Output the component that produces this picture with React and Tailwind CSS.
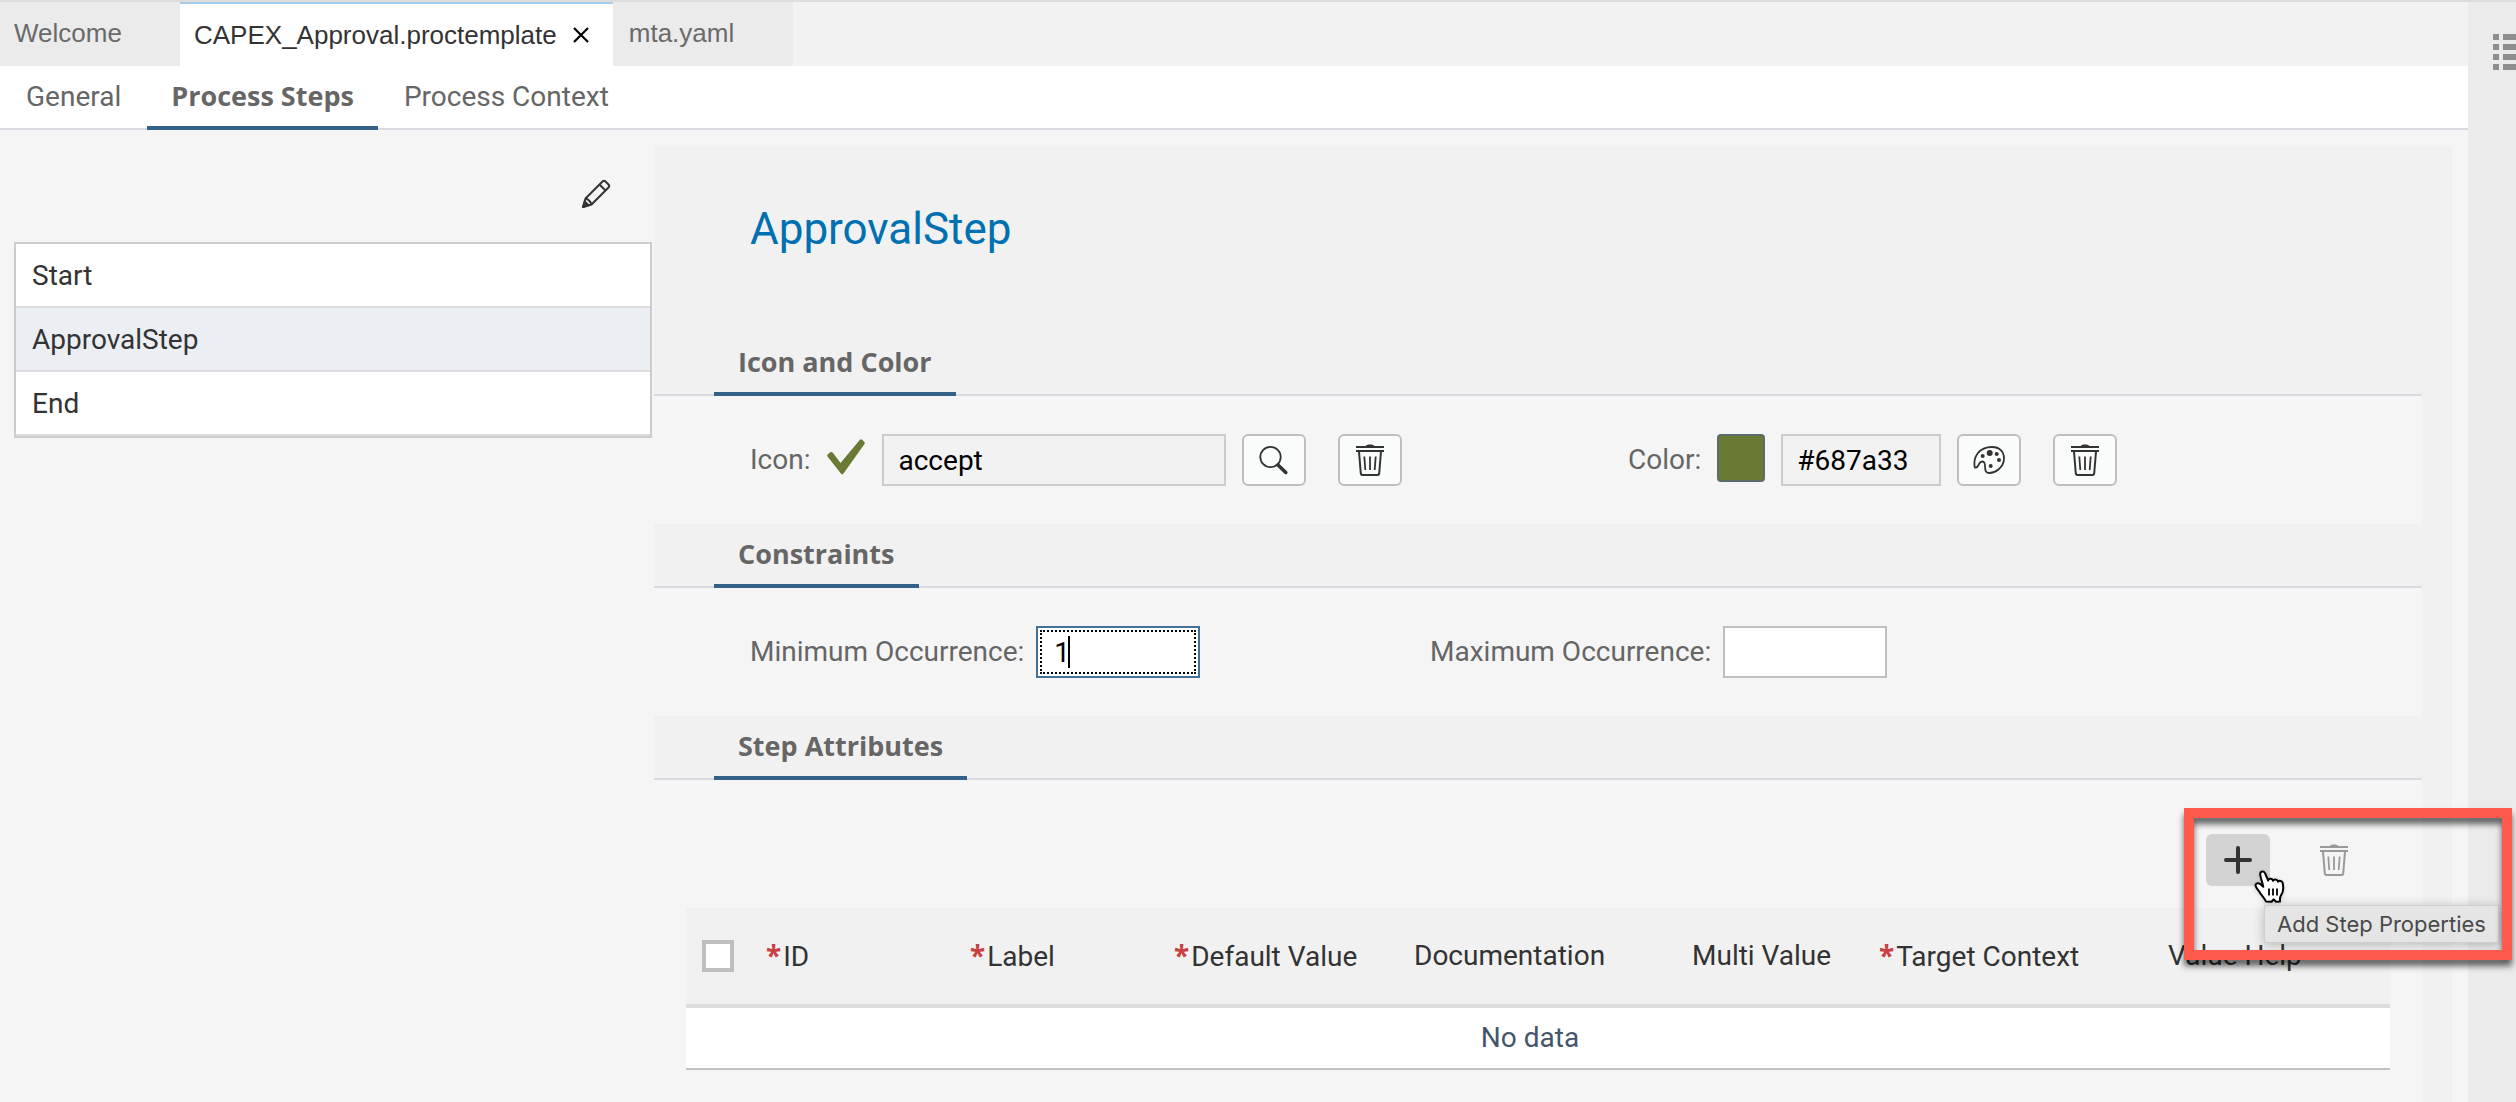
import { useState } from "react";

const COLUMNS = [
  { label: "ID", required: true, width: "w-[204px]" },
  { label: "Label", required: true, width: "w-[204px]" },
  { label: "Default Value", required: true, width: "w-[240px]" },
  { label: "Documentation", width: "w-[278px]" },
  { label: "Multi Value", width: "w-[187px]" },
  { label: "Target Context", required: true, width: "w-[289px]" },
  { label: "Value Help", width: "w-[238px]" },
];

function TrashIcon() {
  return (
    <svg className="size-8" viewBox="0 0 32 32" fill="none" stroke="currentColor" strokeWidth="2" aria-hidden="true">
      <path d="M2 3h28M2 7h28" />
      <path d="M11.500 2.500C12 1 13.500 .5 16 .5s4 .5 4.500 2z" fill="currentColor" stroke="none" />
      <path d="M5 7.500L6.800 29.500Q7 31 8.500 31h15q1.500 0 1.700-1.500L27 7.500" />
      <path d="M10.300 12.500l1 13.500M16 12.500V26M21.700 12.500l-1 13.500" strokeWidth="1.800" />
    </svg>
  );
}

function SearchIcon() {
  return (
    <svg className="size-8" viewBox="0 0 32 32" fill="none" stroke="currentColor" aria-hidden="true">
      <circle cx="12.500" cy="13" r="10.200" strokeWidth="1.800" />
      <path d="M20 21l7.800 7.500" strokeWidth="3.600" strokeLinecap="round" />
    </svg>
  );
}

function PaletteIcon() {
  return (
    <svg className="size-8" viewBox="0 0 32 32" aria-hidden="true">
      <path
        d="M1.800 23.500C-.2 13 6 3 19 3c7.500 0 12 4.500 12 11.500 0 9-9 14.700-15 14.500-5.500-.2-3-6-4.500-10-.8-2-3.700-2.200-5.200.5-1 1.700-1.800 5-4.500 4z"
        fill="none"
        stroke="currentColor"
        strokeWidth="1.800"
      />
      <g fill="currentColor">
        <circle cx="9.700" cy="12" r="2" />
        <circle cx="16.700" cy="9" r="3" />
        <circle cx="23.700" cy="10" r="2" />
        <circle cx="26" cy="16" r="2" />
        <circle cx="17.700" cy="22" r="2" />
      </g>
    </svg>
  );
}

function PencilIcon() {
  return (
    <svg className="size-8" viewBox="0 0 32 32" fill="none" stroke="currentColor" strokeWidth="2" strokeLinejoin="round" aria-hidden="true">
      <path d="M3 29l2.500-8.500L22.500 3.500Q24 2 25.500 3.500l3 3Q30 8 28.500 9.500L11.500 26.500z" />
      <path d="M19.500 6.500l6 6M5.500 20.500q4.500 1.500 6 6" />
      <path d="M3 29l1.700-5.500 3.800 3.800z" fill="currentColor" />
    </svg>
  );
}

function IconButton({ label, children }) {
  return (
    <button
      type="button"
      aria-label={label}
      className="flex h-13 w-16 shrink-0 items-center justify-center rounded-md border-2 border-[#bfbfbf] bg-[#fafcfb] text-[#333]"
    >
      {children}
    </button>
  );
}

function Section({ title, children }) {
  return (
    <section>
      <div className="flex h-16 border-b-2 border-[#dadae0] bg-[#f1f1f1] pl-15">
        <h2 className="-mb-0.5 flex items-center border-b-4 border-[#346187] px-6 font-['Open_Sans','Noto_Sans',sans-serif] text-[27px] font-bold text-[#666]">
          {title}
        </h2>
      </div>
      {children}
    </section>
  );
}

function FileTabs() {
  const idle = "flex w-45 items-center bg-[#ebebeb] pb-0.5 text-[#6a6a6a]";
  return (
    <div className="flex h-16 bg-[#f2f2f2] font-['Liberation_Sans',Arial,sans-serif] text-[26px]">
      <button type="button" className={`${idle} pl-3.5`}>Welcome</button>
      <div className="flex items-center border-t-2 border-[#a5cbeb] bg-white pr-5.5 pl-3.5 text-[#333]">
        <button type="button">CAPEX_Approval.proctemplate</button>
        <button type="button" aria-label="Close" className="ml-3.5 text-black">
          <svg className="size-5" viewBox="0 0 20 20" stroke="currentColor" strokeWidth="2.200" aria-hidden="true">
            <path d="M3 3l14 14M17 3L3 17" />
          </svg>
        </button>
      </div>
      <button type="button" className={`${idle} pl-4`}>mta.yaml</button>
    </div>
  );
}

function EditorNav() {
  return (
    <nav className="flex h-16 gap-0.5 border-b-2 border-[#dadae0] bg-white pl-0.5 text-[#666]">
      <a href="#general" className="flex items-center px-6">General</a>
      <a
        href="#steps"
        aria-current="page"
        className="-mb-0.5 flex items-center border-b-4 border-[#346187] px-6 font-['Open_Sans','Noto_Sans',sans-serif] text-[27px] font-bold"
      >
        Process Steps
      </a>
      <a href="#context" className="flex items-center px-6">Process Context</a>
    </nav>
  );
}

function StepList() {
  const row = "block h-16 w-full border-b-2 border-[#ddd] px-4 pt-0.5 text-left text-[#333]";
  return (
    <div className="w-[654px] shrink-0 pr-0.5 pl-3.5">
      <div className="flex justify-end pt-12 pr-10 pb-8">
        <button type="button" aria-label="Edit steps" className="text-[#333]">
          <PencilIcon />
        </button>
      </div>
      <ul className="border-2 border-[#ccc]">
        <li><button type="button" className={`${row} bg-white`}>Start</button></li>
        <li><button type="button" className={`${row} bg-[#ebeef3]`}>ApprovalStep</button></li>
        <li><button type="button" className={`${row} bg-white`}>End</button></li>
      </ul>
    </div>
  );
}

function IconAndColor() {
  const field = "h-13 min-w-0 border-2 border-[#ccc] bg-[#f2f2f2] px-3.5 text-black";
  return (
    <div className="grid h-32 grid-cols-[878fr_794fr] pt-[38px] pl-24">
      <div className="flex gap-4">
        <label htmlFor="icon" className="leading-[52px] text-[#666]">Icon:</label>
        <svg className="mt-1 h-10 w-10" viewBox="0 0 40 40" aria-hidden="true">
          <path d="M1.500 18.500Q.8 17 2 16l2.300-1.700q1.500-.9 2.600.5L14.500 25 33.500 2.200q1.300-1.500 2.700-.5L38 3.500q1.500 1.200.5 2.500L17.500 35.500q-1.300 1.700-2.600 0z" fill="#687a33" />
        </svg>
        <input id="icon" readOnly value="accept" className={`${field} w-[344px]`} />
        <IconButton label="Browse icons"><SearchIcon /></IconButton>
        <div className="pl-4"><IconButton label="Delete icon"><TrashIcon /></IconButton></div>
      </div>
      <div className="flex gap-4">
        <label htmlFor="color" className="leading-[52px] text-[#666]">Color:</label>
        <span className="size-12 rounded-sm border-2 border-[#5c6b6b] bg-[#687a33]" />
        <input id="color" readOnly value="#687a33" className={`${field} w-40`} />
        <IconButton label="Pick color"><PaletteIcon /></IconButton>
        <div className="pl-4"><IconButton label="Delete color"><TrashIcon /></IconButton></div>
      </div>
    </div>
  );
}

function Constraints() {
  const [min, setMin] = useState("1");
  const [max, setMax] = useState("");
  return (
    <div className="grid h-32 grid-cols-[680fr_992fr] pt-[38px] pl-24">
      <div className="flex gap-3">
        <label htmlFor="min" className="leading-[52px] text-[#666]">Minimum Occurrence:</label>
        <div className="relative h-13 w-41">
          <input
            id="min"
            value={min}
            onChange={(e) => setMin(e.target.value)}
            className="h-13 w-full border-2 border-[#427196] bg-white px-4 text-black outline-2 -outline-offset-6 outline-black outline-dotted"
          />
          <span className="absolute top-2.5 left-8 h-8 w-0.5 bg-black" />
        </div>
      </div>
      <div className="flex gap-3">
        <label htmlFor="max" className="leading-[52px] text-[#666]">Maximum Occurrence:</label>
        <input
          id="max"
          value={max}
          onChange={(e) => setMax(e.target.value)}
          className="h-13 w-41 border-2 border-[#bfbfbf] bg-white px-4 text-black"
        />
      </div>
    </div>
  );
}

function HandCursor() {
  return (
    <svg className="absolute top-9 left-12 h-9 w-8 drop-shadow-sm" viewBox="0 0 32 36" aria-hidden="true">
      <path
        d="M12 31.500c-1-3-4.500-6-6.500-9.500-1.500-2.500-4.500-5-4-7 .6-2 3.200-2.300 5-.8l2.800 2.600C8.300 12 6.500 7.500 6.200 4.500 6 1 10 .5 11.200 3.500l3 7c.3-2.500 4.300-2.500 4.800.3.800-2 4.500-1.600 5 .9 1-1.600 4.300-1 4.800 1.500.6 3 .9 6-.2 9-1 2.500-2.600 4-2.600 6.500v2.800l-4.200.2-2-2.400-2.300 2.500z"
        fill="white"
        stroke="black"
        strokeWidth="2"
        strokeLinejoin="round"
      />
      <path d="M15 18.500v7M19 18.500v7M23 18.500v7" stroke="black" strokeWidth="1.800" />
    </svg>
  );
}

function StepAttributes() {
  return (
    <div className="px-8">
      <div className="flex justify-end gap-8 pt-[54px] pr-6 pb-[22px]">
        <div className="relative">
          <button
            type="button"
            aria-label="Add"
            aria-describedby="add-tip"
            className="flex h-13 w-16 items-center justify-center rounded-md bg-[#d3d3d3] text-[#333]"
          >
            <svg className="size-7" viewBox="0 0 28 28" stroke="currentColor" strokeWidth="4" strokeLinecap="round" aria-hidden="true">
              <path d="M2 14h24M14 2v24" />
            </svg>
          </button>
          <span
            id="add-tip"
            role="tooltip"
            className="absolute top-[71px] left-[58px] z-10 border border-[#cfcfcf] bg-[#e5e5e5] px-3 font-['Inter',sans-serif] text-[22px] leading-9 whitespace-nowrap text-[#4a4a4a] shadow-[0_2px_12px_rgba(0,0,0,0.25)]"
          >
            Add Step Properties
          </span>
          <HandCursor />
          <div className="pointer-events-none absolute -top-[26px] -left-[22px] z-20 h-38 w-82 border-10 border-[#ff5a4b] drop-shadow-[0_6px_3px_rgba(0,0,0,0.6)]" />
        </div>
        <button type="button" disabled aria-label="Delete" className="flex h-13 w-16 items-center justify-center text-[#999]">
          <TrashIcon />
        </button>
      </div>
      <table className="w-full table-fixed border-separate border-spacing-0 text-[#333]">
        <thead>
          <tr className="h-25 bg-[#f1f1f1]">
            <th className="w-16 border-b-4 border-[#ddd] pl-4 text-left">
              <input
                type="checkbox"
                aria-label="Select all"
                className="block size-8 appearance-none border-4 border-[#bfbfbf] bg-white"
              />
            </th>
            {COLUMNS.map((c) => (
              <th key={c.label} className={`${c.width} border-b-4 border-[#ddd] pl-4 text-left font-normal whitespace-nowrap`}>
                {c.required && <span className="mr-0.5 font-['Noto_Sans',sans-serif] font-bold text-[#c84040]">*</span>}
                {c.label}
              </th>
            ))}
          </tr>
        </thead>
        <tbody>
          <tr className="h-15.5 bg-white">
            <td colSpan={8} className="border-b-2 border-[#c2c2c2] pr-4 text-center text-[#44546a]">No data</td>
          </tr>
        </tbody>
      </table>
    </div>
  );
}

export default function App() {
  return (
    <div className="flex min-h-screen border-t-2 border-[#ddd] bg-[#f5f5f5] font-['Roboto',sans-serif] text-[28px] leading-9">
      <div className="flex min-w-0 flex-1 flex-col">
        <FileTabs />
        <EditorNav />
        <div className="flex flex-1">
          <StepList />
          <main className="mt-4 mr-4 flex min-w-0 flex-1 flex-col bg-[#f1f1f1] pr-[30px]">
            <h1 className="pt-14.5 pb-19.5 pl-24 text-[44px] leading-[50px] text-[#0070b1]">ApprovalStep</h1>
            <div className="flex-1 bg-[#f5f5f5]">
              <Section title="Icon and Color"><IconAndColor /></Section>
              <Section title="Constraints"><Constraints /></Section>
              <Section title="Step Attributes"><StepAttributes /></Section>
            </div>
          </main>
        </div>
      </div>
      <aside className="flex w-12 shrink-0 items-start justify-end bg-[#ebebeb]">
        <button type="button" aria-label="Outline" className="pt-8">
          <svg className="h-9 w-6" viewBox="0 0 24 36" fill="#8e8e8e" aria-hidden="true">
            <path d="M1 0h6v6H1zM11 0h13v6H11zM1 10h6v6H1zM11 10h13v6H11zM1 20h6v6H1zM11 20h13v6H11zM1 30h6v6H1zM11 30h13v6H11z" />
          </svg>
        </button>
      </aside>
    </div>
  );
}
